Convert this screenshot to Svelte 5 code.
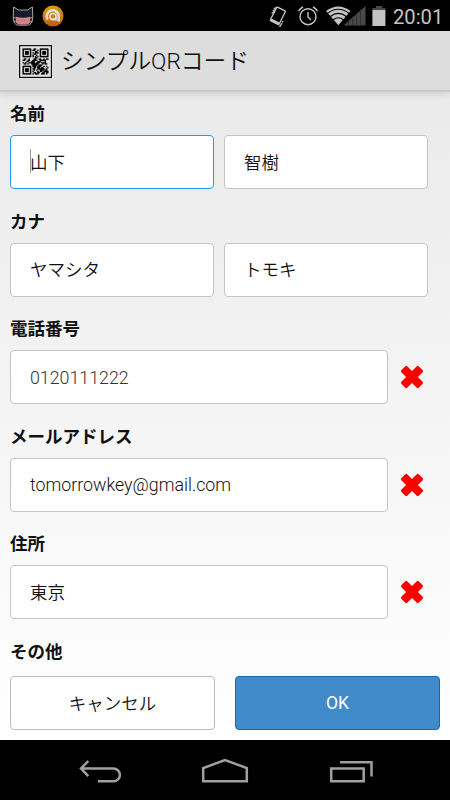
<script>
  const groups = [
    { label: '名前', values: ['山下', '智樹'], focus: true },
    { label: 'カナ', values: ['ヤマシタ', 'トモキ'] },
    { label: '電話番号', values: ['0120111222'], removable: true, latin: 'digits' },
    { label: 'メールアドレス', values: ['tomorrowkey@gmail.com'], removable: true, latin: 'mail' },
    { label: '住所', values: ['東京'], removable: true },
    { label: 'その他', values: [] }
  ];

  const qr = [
    '111111100110001111111',
    '100000101100101000001',
    '101110100011001011101',
    '101110101011101011101',
    '101110100110001011101',
    '100000101001001000001',
    '111111101010101111111',
    '000000000011000000000',
    '011001000110011001011',
    '110011001111001111100',
    '000110011100111000100',
    '101001111101110111100',
    '011010011111100010110',
    '000000001111011100000',
    '111111101110111001010',
    '100000100110110110001',
    '101110101100111111010',
    '101110100101001110110',
    '101110101000101101111',
    '100000100110110011011',
    '111111101011100111010'
  ];
  const modules = qr
    .flatMap((row, y) => [...row].map((c, x) => (c === '1' ? `M${x} ${y}h1v1h-1z` : '')))
    .join('');
</script>

<div class="screen">
  <div class="status">
    <svg class="cat" width="22" height="20" viewBox="0 0 22 20">
      <path d="M1.6 1 6.5 4h9l4.9-3 .4 10q0 8-5.3 8.2h-9Q1.2 19 1.2 11z" fill="#121a2a" stroke="#a5a6a8" stroke-width="1" />
      <path d="M4 10.8q3.5.9 7 .9t7-.9v5.6q-1.5 2.2-7 2.2t-7-2.2z" fill="#d58586" />
      <path d="M1.4 11.4l2.6.8M18 12.2l2.6-.8M2 15.4l2-.4M18 15l2 .4" stroke="#c4a4a4" stroke-width="1" />
      <path d="M4 14.8h14" stroke="#c07378" stroke-width=".7" />
    </svg>
    <svg class="avast" width="22" height="22" viewBox="0 0 22 22">
      <defs><linearGradient id="orange" x2="0" y2="1"><stop stop-color="#d4a014" /><stop offset="1" stop-color="#c85a05" /></linearGradient></defs>
      <circle cx="11" cy="11" r="10.5" fill="url(#orange)" />
      <path d="M5.7 14.6A6 6 0 1 1 16.7 11v5.6M13.6 11.4a2.6 2.6 0 1 0-2.6 2.8h2.6z" fill="none" stroke="#dedede" stroke-width="2.6" />
      <circle cx="11" cy="11.3" r="2.1" fill="#d07d0d" />
    </svg>
    <span class="grow"></span>
    <svg class="rotate" width="18" height="22" viewBox="0 0 18 22" fill="none" stroke="#c4c4c4">
      <path d="M8.5 2.2 16 5.8q.6.4.3 1L10.2 19q-.4.7-1 .4L1.7 15.7q-.6-.4-.3-1L7.5 2.6q.3-.6 1-.4z" stroke-width="1.3" />
      <path d="M1.8 14.8l8 3.9" stroke-width="2.8" />
      <path d="M3 8.5l3-6M4.8 8l2.8-6.5M12.6 18.5l-2 3.5M14 16l-3 5.5" stroke-width="1.5" stroke-dasharray="1.6 .8" />
    </svg>
    <svg class="alarm" width="20" height="20" viewBox="0 0 20 20" fill="none" stroke="#c4c4c4" stroke-width="1.4">
      <circle cx="10" cy="10.7" r="8" /><path d="M10 6v5l3 3M.5 5.2Q2 2.5 5 1M19.5 5.2Q18 2.5 15 1" />
    </svg>
    <svg class="signal" width="40" height="21" viewBox="0 0 40 21">
      <path d="M17.5 20.5 39.5 1v19.5z" fill="#484848" />
      <path d="M22.5 15v6M26.5 11v10M30.5 8v13M34.5 4v17" stroke="#292929" stroke-width=".8" />
      <path d="M0 6Q12.3-3 24.6 6L12.3 20.3z" fill="#c4c4c4" />
      <path d="M1.3 8.5Q12.3 0 23.3 8.5M4 11.7q8.3-6.6 16.6 0M7 15q5.3-4.6 10.6 0" fill="none" stroke="#000" stroke-width="1.1" />
    </svg>
    <svg class="battery" width="14" height="20" viewBox="0 0 14 20"><path d="M4 0h6v2h3.4v2H.4V2H4z" fill="#484848" /><path d="M.4 4h13v16H.4z" fill="#c4c4c4" /></svg>
    <span class="clock">20:01</span>
  </div>

  <header>
    <svg class="qr" width="33" height="33" viewBox="0 0 33 33">
      <path d="M0 0h33v33H0z" fill="#111" /><path d="M1.2 1.2h30.6v30.6H1.2z" fill="#e4e4e4" />
      <path d={modules} fill="#050505" stroke="#050505" stroke-width=".16" transform="translate(3.6 3.6) scale(1.23)" />
    </svg>
    <h1>シンプルQRコード</h1>
  </header>

  <main>
    {#each groups as group}
      <section>
        <h2>{group.label}</h2>
        <div class="row">
          {#each group.values as value, i}
            <div class="field {group.latin ?? ''}" class:wide={group.removable} class:focused={group.focus && i === 0}>
              {#if group.focus && i === 0}<i class="caret"></i>{/if}<span>{value}</span>
            </div>
          {/each}
          {#if group.removable}
            <svg class="remove" width="24" height="24" viewBox="0 0 24 24">
              <path d="M5.3 1.2Q6.2.3 7.2 1.2L12 6 16.8 1.2Q17.8.3 18.7 1.2L22.7 5.2Q23.5 6.2 22.7 7.2L17.9 12 22.7 16.8Q23.5 17.8 22.7 18.8L18.7 22.7Q17.8 23.5 16.8 22.7L12 17.9 7.2 22.7Q6.2 23.5 5.3 22.7L1.3 18.8Q.5 17.8 1.3 16.8L6.1 12 1.3 7.2Q.5 6.2 1.3 5.2z" fill="#f00" />
            </svg>
          {/if}
        </div>
      </section>
    {/each}
  </main>

  <footer>
    <div class="button cancel">キャンセル</div>
    <div class="button ok">OK</div>
  </footer>

  <nav>
    <svg width="450" height="60" viewBox="0 0 450 60" fill="none" stroke="#a0a0a0" stroke-width="2.5">
      <path d="M81 28.5h32.5a6.3 6.3 0 0 1 0 12.8H98M88.3 21 81 28.5l7.3 7.7" />
      <path d="M203.2 41.2V28.1L225 20l21.8 8.1v13.1z" />
      <path d="M331.2 28.5h32.5v12.8h-32.5zM340 22.3h31.5v14.2" />
    </svg>
  </nav>
</div>

<style>
  :global(body) { margin: 0; overflow: hidden; }
  .screen {
    width: 450px; height: 800px; display: flex; flex-direction: column; overflow: hidden;
    background: linear-gradient(#000 31px, #e8e8e8 31px, #fff 740px);
    font-family: Roboto, "Noto Sans CJK JP", sans-serif; color: #111;
  }
  .status { height: 31px; flex: none; display: flex; align-items: center; box-sizing: border-box; padding-left: 12px; background: #000; }
  .avast { margin-left: 8px; }
  .grow { flex: 1; }
  .alarm { margin-left: 11px; }
  .signal { margin-left: 8px; }
  .battery { margin-left: 6px; }
  .clock { width: 49px; margin: 2px 8px 0 7px; color: #c4c4c4; font-size: 20.2px; line-height: 28px; white-space: nowrap; }
  header {
    height: 61px; flex: none; display: flex; align-items: center; padding-left: 19px;
    background: #ddd; box-sizing: border-box; border-bottom: 2px solid #c9c9c9;
    box-shadow: 0 1px 8px rgba(0, 0, 0, .15);
  }
  .qr { margin-top: 2px; }
  h1 { margin: 2px 0 0 9px; font-size: 22.7px; line-height: 32px; font-weight: 350; white-space: nowrap; }
  main { flex: 1; min-height: 0; overflow: hidden; padding: 4px 10px 0; }
  section { height: 107.5px; }
  h2 { margin: 0; height: 39px; font-size: 17.5px; line-height: 36px; font-weight: 700; }
  .row { display: flex; align-items: center; gap: 10px; }
  .field {
    width: 204px; height: 54px; box-sizing: border-box; display: flex; align-items: center;
    border: 1.4px solid #c4c4c4; border-radius: 4px; background: #fff; padding: 0 0 2px 19px;
    font-size: 17.5px; font-weight: 350; white-space: nowrap;
  }
  .wide { width: 378px; }
  .digits { font-size: 17.8px; font-weight: 350; color: #333; padding-bottom: 0; }
  .mail { font-size: 17.8px; padding-bottom: 0; }
  .focused { border-color: #219be8; }
  .caret { width: 1px; height: 24px; background: #999; margin-right: -1px; }
  .remove { margin-left: 2px; }
  footer { height: 64px; flex: none; display: flex; gap: 20px; padding: 0 10px; }
  .button {
    flex: 1; height: 54px; box-sizing: border-box; display: flex; align-items: center; justify-content: center;
    border: 1px solid #bdbdbd; border-radius: 4px; font-size: 17.5px; font-weight: 350; background: #fff;
  }
  .cancel { padding-bottom: 2px; }
  .ok { background: #428bca; border-color: #1269b4; color: #fff; font-weight: 400; }
  nav { height: 60px; flex: none; background: #000; }
  nav svg { display: block; }
</style>
